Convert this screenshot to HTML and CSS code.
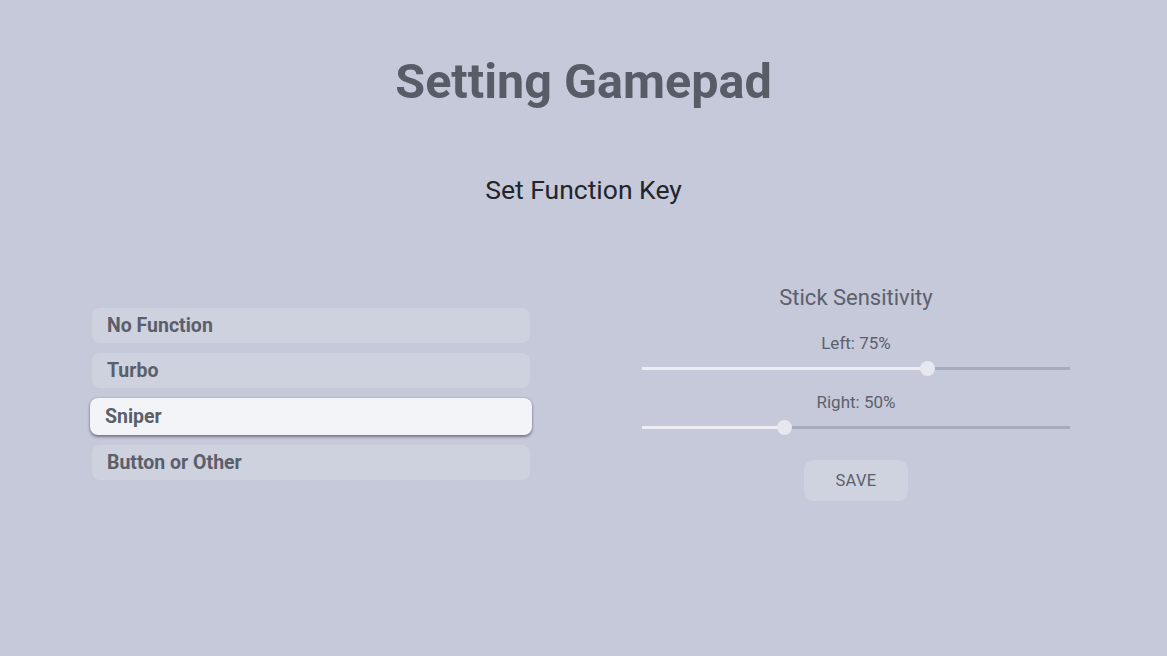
FILE: index.html
```html
<!DOCTYPE html>
<html>
<head>
<meta charset="utf-8">
<link rel="stylesheet" href="styles.css">
</head>
<body>
<div class="page">
  <h1 class="title">Setting Gamepad</h1>
  <h2 class="subtitle">Set Function Key</h2>
  <div class="content">
    <ul class="options">
      <li class="option">No Function</li>
      <li class="option">Turbo</li>
      <li class="option selected">Sniper</li>
      <li class="option">Button or Other</li>
    </ul>
    <div class="sensitivity">
      <div class="sens-title">Stick Sensitivity</div>
      <div class="slider-label">Left: 75%</div>
      <div class="slider">
        <div class="track-fill" style="width: 66.6%"></div>
        <div class="thumb"></div>
        <div class="track-rest"></div>
      </div>
      <div class="slider-label">Right: 50%</div>
      <div class="slider">
        <div class="track-fill" style="width: 33.3%"></div>
        <div class="thumb"></div>
        <div class="track-rest"></div>
      </div>
      <button class="save">SAVE</button>
    </div>
  </div>
</div>
</body>
</html>
```

FILE: styles.css
```css
html, body {
  margin: 0;
  padding: 0;
  background: #c6c9d9;
  font-family: Roboto, "Liberation Sans", sans-serif;
}
.page {
  width: 1167px;
  height: 656px;
  display: flex;
  flex-direction: column;
  align-items: center;
}
.title {
  margin: 54px 0 0;
  font-size: 48.5px;
  line-height: 56px;
  font-weight: 700;
  color: #585c67;
}
.subtitle {
  margin: 64px 0 0;
  font-size: 26.5px;
  line-height: 32px;
  font-weight: 400;
  color: #22252c;
}
.content {
  align-self: stretch;
  display: flex;
  align-items: center;
  gap: 112px;
  padding-left: 92px;
  margin-top: 79px;
}
.options {
  list-style: none;
  margin: 0;
  padding: 2px 0 0;
  width: 438px;
  display: flex;
  flex-direction: column;
  gap: 10px;
}
.option {
  height: 35px;
  box-sizing: border-box;
  padding-left: 15px;
  display: flex;
  align-items: center;
  background: #ced1de;
  border-radius: 8px;
  font-size: 19.5px;
  font-weight: 700;
  color: #5b5f6a;
}
.option.selected {
  height: 37px;
  margin: 0 -2px;
  background: #f3f4f7;
  box-shadow: 0 2px 3px rgba(70, 74, 90, 0.6), 0 0 2px rgba(70, 74, 90, 0.4);
}
.sensitivity {
  width: 428px;
  display: flex;
  flex-direction: column;
  align-items: center;
}
.sens-title {
  font-size: 22px;
  line-height: 26px;
  color: #5c606d;
}
.slider-label {
  margin-top: 22px;
  font-size: 17px;
  line-height: 20px;
  color: #5c606d;
}
.slider + .slider-label {
  margin-top: 16px;
}
.slider {
  align-self: stretch;
  height: 16px;
  margin-top: 7px;
  display: flex;
  align-items: center;
}
.track-fill {
  height: 3px;
  background: #eceef3;
  flex: none;
}
.track-rest {
  height: 3px;
  background: #a7abbe;
  flex: 1;
}
.thumb {
  width: 15px;
  height: 15px;
  border-radius: 50%;
  background: #e6e8ee;
  margin: 0 -7.5px;
  position: relative;
  z-index: 1;
  flex: none;
}
.save {
  margin-top: 25px;
  width: 104px;
  height: 41px;
  border: none;
  border-radius: 9px;
  background: #cfd2df;
  font-family: Roboto, "Liberation Sans", sans-serif;
  font-size: 16.5px;
  color: #5c606d;
  letter-spacing: 0.3px;
}
```
